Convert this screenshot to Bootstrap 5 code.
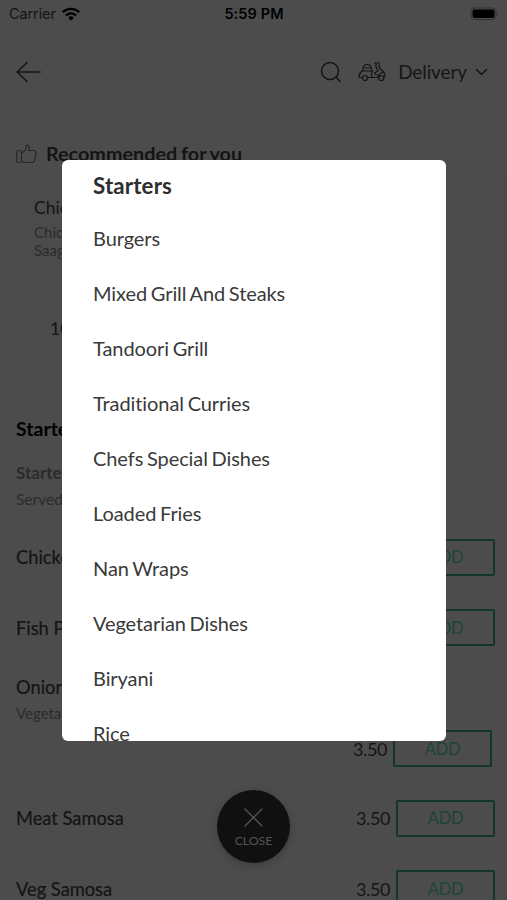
<!DOCTYPE html>
<html lang="en">
<head>
<meta charset="utf-8">
<meta name="viewport" content="width=device-width, initial-scale=1">
<title>Menu</title>
<link href="https://cdn.jsdelivr.net/npm/bootstrap@5.3.0/dist/css/bootstrap.min.css" rel="stylesheet">
<style>
body{background:#4c4c4c;font-family:Lato,sans-serif;color:#141414;line-height:1.2;font-variant-ligatures:none}
svg{display:block;fill:none;stroke:currentColor;stroke-linecap:round;stroke-linejoin:round}
.screen{width:507px;height:900px;background:#4c4c4c}
.status{height:28px;font:14.5px/28px Inter,"Liberation Sans",sans-serif;padding:0 8px 0 9px}
.status-side{width:150px}
.carrier{letter-spacing:-.1px}
.wifi{color:#000;margin-left:6px}
.status .clock{font-weight:600;color:#000;letter-spacing:.1px}
.topbar{height:88px;padding:0 19px 0 16px}
.scooter{margin-left:17px}
.mode{font-size:19px;color:#161616;letter-spacing:-.1px;padding-top:1px}
.recommend{height:60px;padding:16px 16px 0;font-size:19.8px;font-weight:700;word-spacing:-1px}
.thumb{color:#292929}
.offers{height:188px;margin-left:16px;gap:18px}
.offer{width:452px;background:#4b4b4b;border-radius:5px;padding:18px 18px 0;flex:none}
.offer-name{font-size:17.5px;line-height:27px;margin-bottom:2px}
.offer-price{padding:59px 16px 0;font-size:17.5px}
.muted{color:#2b2b2b;font-size:15px}
.group-title{height:42px;margin-top:53px;margin-bottom:1px;padding:0 16px;font-size:19.5px;font-weight:700;color:#000}
.group-note{height:62px;padding:0 16px}
.group-note .muted{line-height:26px;font-size:15.5px}
.group-note .subtitle{font-size:17px;font-weight:700}
.dish{height:70.5px;padding:0 12px 0 16px;font-size:18.3px}
.dish-tall{height:120px;padding:12px 15px 0 16px;font-size:18.3px}
.dish-tall .muted{margin:5px 0 8px}
.dish-name{-webkit-text-stroke:.2px #141414;padding-top:2px}
.price{font-size:18px;width:39px;letter-spacing:-.4px;padding-top:2px}
.add{width:99px;height:37px;border:2px solid #123726;border-radius:2px;color:#1b4632;font-size:16.5px;margin-left:1px;letter-spacing:-.2px}
.add span{display:block;padding-top:2px}
.picker{left:62px;top:160px;width:384px;height:581px;background:#fff;border-radius:6px;color:#3a3a3a;padding-left:31px;font-size:20px;letter-spacing:-.08px;word-spacing:-1.3px}
.picker div{height:55px;line-height:53px}
.picker .current{font-weight:700;color:#2e2e2e;font-size:22.3px;line-height:58px;margin-top:-3px;letter-spacing:.15px}
.close-btn{left:217px;top:790px;width:73px;height:73px;background:#101010;color:#555;border:0;box-shadow:0 2px 8px rgba(0,0,0,.22);font-size:12.3px;padding:3px 0 0}
.close-label{margin-top:7px}
</style>
<script src="https://cdn.jsdelivr.net/npm/bootstrap@5.3.0/dist/js/bootstrap.bundle.min.js"></script>
</head>
<body>
<div class="screen position-relative overflow-hidden">
  <div class="status d-flex justify-content-between align-items-center">
    <div class="status-side d-flex align-items-center"><span class="carrier">Carrier</span>
      <svg class="wifi" width="18" height="14" viewBox="0 0 18 14" stroke-width="2.3"><g stroke-linecap="butt"><path d="M.8 5.200A11.600 11.600 0 0 1 17.200 5.200"/><path d="M4 8.500A7 7 0 0 1 14 8.500"/></g><path fill="#000" stroke="none" d="M6.200 10.700A4 4 0 0 1 11.800 10.700L9 13.700Z"/></svg></div>
    <span class="clock">5:59 PM</span>
    <div class="status-side d-flex justify-content-end"><svg width="30" height="14" viewBox="0 0 30 14"><rect x="2" y="1" width="25" height="11.500" rx="3.500" stroke="#303030"/><rect x="3.500" y="2.500" width="22" height="8.500" rx="2" fill="#000" stroke="none"/><path d="M28.500 5v4q1.500-2 0-4" fill="#303030" stroke="none"/></svg></div>
  </div>
  <header class="topbar d-flex align-items-center">
    <svg width="25" height="22" viewBox="0 0 25 22" stroke-width="1.500"><path d="M24 11H1M11 1.500L1 11L11 20.500"/></svg>
    <svg class="ms-auto" width="22" height="22" viewBox="0 0 22 22" stroke-width="1.500"><circle cx="11" cy="10" r="8.500"/><path d="M17 16L21 20.500"/></svg>
    <svg class="scooter" width="28" height="20" viewBox="0 0 28 20" stroke-width="1.200"><path d="M5 9V7Q5 2.500 9 2.500T13.500 7V9M5 6H13.500M4 9H14.500M4 9Q1 11.500 1 15.500H4.500M14.500 9Q12.500 12 14.500 15.500H20.500M9.500 15.500H14.500M16.500 1H21L21.500 6L26 10.500M18 1V5L20 9L16.500 11L18 13H20.500M26 10.500Q20.500 10.500 20.500 15.500M26 10.500Q28 13 26 15.500"/><circle cx="7" cy="16" r="2.500"/><circle cx="23.300" cy="16" r="2.500"/></svg>
    <span class="mode ms-2 ps-1">Delivery</span>
    <svg class="ms-2" width="13" height="8" viewBox="0 0 13 8" stroke-width="1.500"><path d="M1.500 1.500L6.500 6.500L11.500 1.500"/></svg>
  </header>
  <div class="recommend d-flex align-items-center">
    <svg class="thumb" width="21" height="20" viewBox="0 0 21 20" stroke-width="1.200"><path d="M1.500 6.500H4.500Q5.500 6.500 5.500 7.500V17.500Q5.500 18.500 4.500 18.500H1.500Q.7 18.500.7 17.500V7.500Q.7 6.500 1.500 6.500ZM5.500 9L8 7.500Q10.500 5 10.500 2Q10.500 1 11.500 1Q14 2 12.800 6.500H18Q20.500 7 20 9.500L18.500 16.500Q18 18.500 16 18.500H9L5.500 17.500"/></svg>
    <span style="margin-left:9px">Recommended for you</span>
  </div>
  <div class="offers d-flex">
    <div class="offer"><div class="offer-name">Chicken</div><div class="muted">Chicken<br>Saag</div><div class="offer-price">10.50</div></div>
    <div class="offer"></div>
  </div>
  <div class="group-title">Starters</div>
  <div class="group-note"><div class="muted subtitle">Starters</div><div class="muted">Served</div></div>
  <div class="dish d-flex align-items-center justify-content-between"><span class="dish-name">Chicken</span><button class="add bg-transparent p-0"><span>ADD</span></button></div>
  <div class="dish d-flex align-items-center justify-content-between"><span class="dish-name">Fish P</span><button class="add bg-transparent p-0"><span>ADD</span></button></div>
  <div class="dish-tall"><div class="dish-name">Onion</div><div class="muted">Vegetarian</div><div class="d-flex justify-content-end align-items-center"><span class="price">3.50</span><button class="add bg-transparent p-0"><span>ADD</span></button></div></div>
  <div class="dish d-flex align-items-center"><span class="dish-name me-auto">Meat Samosa</span><span class="price">3.50</span><button class="add bg-transparent p-0"><span>ADD</span></button></div>
  <div class="dish d-flex align-items-center"><span class="dish-name me-auto">Veg Samosa</span><span class="price">3.50</span><button class="add bg-transparent p-0"><span>ADD</span></button></div>

  <div class="picker position-absolute overflow-hidden">
    <div class="current">Starters</div>
    <div>Burgers</div><div>Mixed Grill And Steaks</div><div>Tandoori Grill</div><div>Traditional Curries</div><div>Chefs Special Dishes</div><div>Loaded Fries</div><div>Nan Wraps</div><div>Vegetarian Dishes</div><div>Biryani</div><div>Rice</div>
  </div>
  <button class="close-btn position-absolute rounded-circle d-flex flex-column align-items-center justify-content-center">
    <svg width="19" height="19" viewBox="0 0 19 19" stroke-width="1.300"><path d="M1 1L18 18M18 1L1 18"/></svg>
    <span class="close-label">CLOSE</span>
  </button>
</div>
</body>
</html>
